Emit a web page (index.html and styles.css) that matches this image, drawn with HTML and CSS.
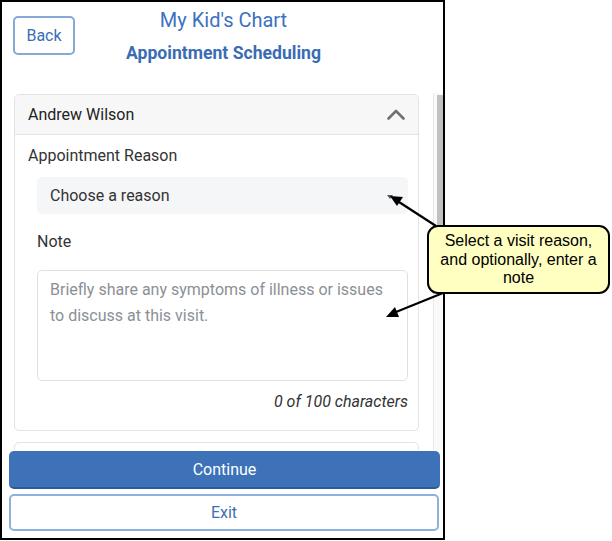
FILE: index.html
```html
<!DOCTYPE html>
<html lang="en">
<head>
<meta charset="utf-8">
<title>Appointment Scheduling</title>
<link rel="stylesheet" href="styles.css">
</head>
<body>
<div class="phone">
  <header class="top">
    <button class="btn-back">Back</button>
    <div class="titles">
      <div class="app-name">My Kid's Chart</div>
      <div class="page-name">Appointment Scheduling</div>
    </div>
    <div></div>
  </header>
  <div class="scroll-area">
    <main class="scroller">
      <section class="card">
        <div class="card-head">
          <span>Andrew Wilson</span>
          <svg class="chev" width="18" height="12" viewBox="0 0 18 12"><polyline points="1.5,10.5 9,3 16.5,10.5" fill="none" stroke="#707070" stroke-width="2.6" stroke-linecap="round" stroke-linejoin="round"/></svg>
        </div>
        <div class="card-body">
          <div class="label">Appointment Reason</div>
          <div class="group">
            <div class="select">
              <span>Choose a reason</span>
              <span class="caret"></span>
            </div>
            <div class="label note-label">Note</div>
            <textarea class="note" placeholder="Briefly share any symptoms of illness or issues to discuss at this visit."></textarea>
            <div class="counter">0 of 100 characters</div>
          </div>
        </div>
      </section>
      <section class="card card-next"></section>
    </main>
    <div class="scrollbar"><div class="thumb"></div></div>
  </div>
  <footer class="actions">
    <button class="btn-continue">Continue</button>
    <button class="btn-exit">Exit</button>
  </footer>
</div>

<svg class="arrows" width="612" height="541" viewBox="0 0 612 541">
  <line x1="436" y1="226" x2="399" y2="202" stroke="#000" stroke-width="2.2"/>
  <polygon points="390,196 403,197 397,206" fill="#000"/>
  <line x1="443" y1="293" x2="396" y2="312" stroke="#000" stroke-width="2.2"/>
  <polygon points="386,317 395,307 399,317" fill="#000"/>
</svg>
<div class="callout">Select a visit reason,<br>and optionally, enter a<br>note</div>
</body>
</html>
```

FILE: styles.css
```css
* { box-sizing: border-box; }
html, body { margin: 0; padding: 0; background: #fff; }
body {
  width: 612px;
  height: 541px;
  position: relative;
  font-family: Roboto, "Noto Sans", Arial, sans-serif;
  overflow: hidden;
}
.phone {
  width: 445px;
  height: 540px;
  border: 2px solid #000;
  display: flex;
  flex-direction: column;
  background: #fff;
}
.top {
  height: 91px;
  display: grid;
  grid-template-columns: 1fr auto 1fr;
  align-items: start;
  flex: none;
}
.btn-back {
  margin: 14px 0 0 11px;
  width: 62px;
  height: 39px;
  border: 2px solid #86a9d9;
  border-radius: 5px;
  background: #fff;
  color: #3a6db4;
  font: 16px Roboto, sans-serif;
  padding: 0;
  justify-self: start;
}
.titles {
  text-align: center;
  padding-left: 2px;
}
.app-name {
  margin-top: 6px;
  font-size: 20px;
  line-height: 24px;
  color: #3c72bf;
}
.page-name {
  margin-top: 10px;
  font-size: 17.6px;
  font-weight: bold;
  line-height: 22px;
  color: #3a6cb3;
}
.scroll-area {
  height: 357px;
  flex: none;
  display: flex;
}
.scroller {
  flex: 1;
  overflow: hidden;
  padding: 1px 14px 0 12px;
}
.scrollbar {
  width: 10px;
  flex: none;
  background: #fafafa;
  border-left: 1px solid #e8e8e8;
  padding: 2px 0 0 3px;
}
.thumb {
  height: 165px;
  background: #c1c1c1;
}
.card {
  border: 1px solid #e3e3e3;
  border-radius: 5px;
  overflow: hidden;
}
.card-head {
  height: 40px;
  background: #f7f7f7;
  border-bottom: 1px solid #e3e3e3;
  display: flex;
  align-items: center;
  justify-content: space-between;
  padding: 0 13px 0 13px;
  font-size: 16px;
  color: #222;
}
.chev { margin-top: -2px; }
.card-body {
  padding: 10px 10px 17px 13px;
}
.label {
  font-size: 16px;
  line-height: 22px;
  color: #333;
}
.group { padding-left: 9px; }
.select {
  margin-top: 10px;
  height: 37px;
  background: #f5f6f8;
  border-radius: 5px;
  display: flex;
  align-items: center;
  justify-content: space-between;
  padding: 0 15px 0 13px;
  font-size: 16px;
  color: #333;
}
.caret {
  width: 0;
  height: 0;
  border-left: 3.5px solid transparent;
  border-right: 3.5px solid transparent;
  border-top: 4px solid #555;
  margin-top: 3px;
}
.note-label { margin-top: 17px; }
.note {
  display: block;
  margin-top: 17px;
  width: 100%;
  height: 111px;
  border: 1px solid #dde1e6;
  border-radius: 5px;
  padding: 6px 12px;
  font: 16px/26px Roboto, sans-serif;
  resize: none;
  color: #333;
}
.note::placeholder { color: #8b9096; }
.counter {
  margin-top: 10px;
  text-align: right;
  font-size: 16px;
  font-style: italic;
  line-height: 22px;
  color: #333;
}
.card-next {
  margin-top: 11px;
  height: 330px;
  background: #fff;
}
.actions {
  flex: none;
  padding: 1px 2px 0 7px;
  display: flex;
  flex-direction: column;
  gap: 5px;
}
.btn-continue {
  height: 38px;
  width: 431px;
  background: #3d72b9;
  border: none;
  border-bottom: 2px solid #2d5a96;
  border-radius: 5px;
  color: #fff;
  font: 16px Roboto, sans-serif;
}
.btn-exit {
  height: 37px;
  width: 430px;
  background: #fff;
  border: 2px solid #8eb0de;
  border-radius: 5px;
  color: #3e6fb3;
  font: 16px Roboto, sans-serif;
}
.arrows {
  position: absolute;
  left: 0;
  top: 0;
  pointer-events: none;
}
.callout {
  position: absolute;
  left: 427px;
  top: 225px;
  width: 183px;
  height: 69px;
  border: 2px solid #000;
  border-radius: 11px;
  background: #ffffc2;
  font: 16px/18.5px "Liberation Sans", Arial, sans-serif;
  color: #000;
  text-align: center;
  padding-top: 5px;
}
```
